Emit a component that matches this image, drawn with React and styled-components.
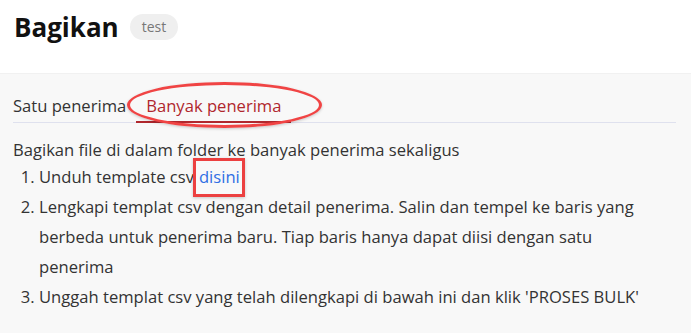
import React, { useState } from "react";
import styled, { createGlobalStyle } from "styled-components";

const GlobalStyle = createGlobalStyle`
  body {
    margin: 0;
    background: #fff;
    font-family: "Open Sans", "Noto Sans", sans-serif;
    color: #333;
  }
`;

const Header = styled.header`
  display: flex;
  align-items: center;
  gap: 11px;
  height: 73px;
  padding: 0 14px 20px;
  box-sizing: border-box;
`;

const Title = styled.h1`
  margin: 0;
  font-size: 26px;
  font-weight: 700;
  color: #111;
`;

const Badge = styled.span`
  display: inline-flex;
  align-items: center;
  height: 26px;
  padding: 0 12px;
  border-radius: 13px;
  background: #efefef;
  color: #777;
  font-size: 14px;
`;

const Panel = styled.section`
  background: #f8f8f8;
  padding: 17px 15px 30px 13px;
  border-top: 1px solid #f1f1f1;
`;

const TabRow = styled.div`
  display: flex;
  gap: 10px;
  border-bottom: 1px solid #dfe1ee;
`;

const Tab = styled.button`
  position: relative;
  background: none;
  border: none;
  font: inherit;
  font-size: 16.6px;
  line-height: 30px;
  padding: 0 ${(p) => (p.$first ? "0" : "10px")};
  margin-bottom: -1px;
  color: ${(p) => (p.$active ? "#b0272d" : "#333")};
  border-bottom: 2px solid ${(p) => (p.$active ? "#b0272d" : "transparent")};
  cursor: pointer;
`;

const Ellipse = styled.span`
  position: absolute;
  left: -9px;
  right: -31px;
  top: -9px;
  bottom: -7px;
  border: 3px solid #f04444;
  border-radius: 50%;
  box-shadow: 0 1px 3px rgba(0, 0, 0, 0.2);
  pointer-events: none;
`;

const Intro = styled.p`
  margin: 14px 0 0;
  font-size: 16.6px;
  line-height: 26px;
`;

const Steps = styled.ol`
  margin: -1px 0 0;
  padding: 0 28px 0 26px;
  font-size: 16.6px;
  line-height: 30px;
`;

const LinkWrap = styled.span`
  position: relative;
  display: inline-block;
  margin-left: 5px;
`;

const Link = styled.a`
  color: #2f6fe4;
  text-decoration: none;
`;

const Box = styled.span`
  position: absolute;
  left: -6px;
  right: -5px;
  top: -4px;
  bottom: -5px;
  border: 3px solid #ec4040;
  box-shadow: 0 1px 3px rgba(0, 0, 0, 0.2);
  pointer-events: none;
`;

export default function App() {
  const [tab, setTab] = useState("bulk");

  return (
    <>
      <GlobalStyle />
      <Header>
        <Title>Bagikan</Title>
        <Badge>test</Badge>
      </Header>
      <Panel>
        <TabRow>
          <Tab $first $active={tab === "single"} onClick={() => setTab("single")}>
            Satu penerima
          </Tab>
          <Tab $active={tab === "bulk"} onClick={() => setTab("bulk")}>
            Banyak penerima
            <Ellipse />
          </Tab>
        </TabRow>
        <Intro>Bagikan file di dalam folder ke banyak penerima sekaligus</Intro>
        <Steps>
          <li>
            Unduh template csv
            <LinkWrap>
              <Link href="#">disini</Link>
              <Box />
            </LinkWrap>
          </li>
          <li>
            Lengkapi templat csv dengan detail penerima. Salin dan tempel ke baris yang
            berbeda untuk penerima baru. Tiap baris hanya dapat diisi dengan satu penerima
          </li>
          <li>Unggah templat csv yang telah dilengkapi di bawah ini dan klik 'PROSES BULK'</li>
        </Steps>
      </Panel>
    </>
  );
}
